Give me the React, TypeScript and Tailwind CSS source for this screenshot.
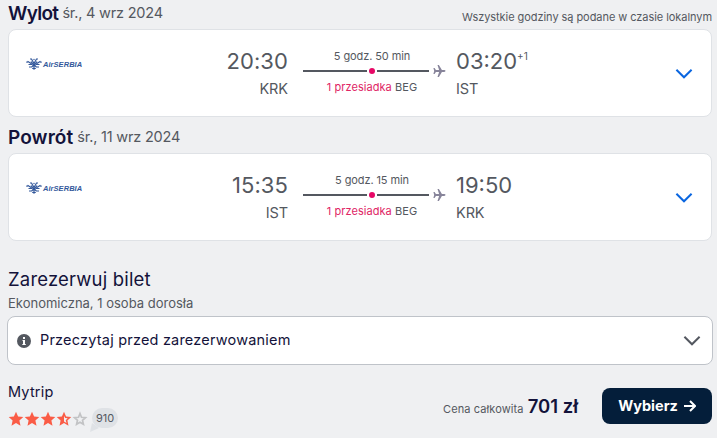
import React from "react";

interface Flight {
  departure: string;
  from: string;
  arrival: string;
  to: string;
  duration: string;
  via: string;
  nextDay?: string;
}

const outbound: Flight = {
  departure: "20:30",
  from: "KRK",
  arrival: "03:20",
  to: "IST",
  duration: "5 godz. 50 min",
  via: "BEG",
  nextDay: "+1",
};

const inbound: Flight = {
  departure: "15:35",
  from: "IST",
  arrival: "19:50",
  to: "KRK",
  duration: "5 godz. 15 min",
  via: "BEG",
};

function AirlineLogo() {
  return (
    <div className="flex h-3 w-[57px] items-center gap-[1px] text-[#33589b]">
      <svg width="16" height="12" viewBox="0 0 16 12" className="shrink-0" fill="none" stroke="currentColor" strokeWidth="1.2">
        <path d="M.3 4.2h1.5M15.7 4.2h-1.5M1.5 3.2 5.5 5.8M14.5 3.2l-4 2.6M4 1h1.5L8 5.5 10.500 1H12M5 3.500 8 7.500l3-4M2.500 6.500h3.800M13.500 6.500H9.700M3 9h2.800L8 6.500 10.200 9H13M8 7v4.800M6.200 10.500h3.600" />
        <circle cx="8" cy="1.5" r=".7" fill="currentColor" stroke="none" />
      </svg>
      <span className="whitespace-nowrap pt-[2px] font-['Liberation_Sans',sans-serif] text-[7.5px] font-bold italic leading-3 tracking-[0.05px]">
        AirSERBIA
      </span>
    </div>
  );
}

function Chevron({ className }: { className: string }) {
  return (
    <svg width="18" height="12" viewBox="0 0 18 12" fill="none" stroke="currentColor" strokeWidth="2" className={className}>
      <path d="M1.4 1.7 9 9.3l7.6-7.6" />
    </svg>
  );
}

function Plane() {
  return (
    <svg width="13" height="12" viewBox="0 0 13 12" className="ml-[4px] shrink-0 text-[#87849a]" fill="currentColor">
      <path d="M.4 3h1.2l1.3 2.1h3.2L4.500 0h1.400l3 5.100h2.300c1.800 0 1.800 1.800 0 1.800H8.900L5.900 12H4.500l1.600-5.100H2.900L1.600 9H.4l.8-3z" />
    </svg>
  );
}

function FlightCard({ flight }: { flight: Flight }) {
  return (
    <div className="flex h-[88px] w-[704px] rounded-lg border border-[#dfe2e6] bg-white text-[#545860]">
      <div className="w-[160px] pl-[17px] pt-[28px]">
        <AirlineLogo />
      </div>
      <div className="flex w-[119px] flex-col items-end pt-[17px]">
        <span className="text-[22px] leading-7 tracking-[0.1px]">{flight.departure}</span>
        <span className="mt-[4px] text-[14.5px] leading-5 tracking-[-0.1px]">{flight.from}</span>
      </div>
      <div className="ml-[15px] w-[143px] pt-[18px]">
        <p className="w-[138px] text-center text-[11px] leading-4 tracking-[-0.1px]">{flight.duration}</p>
        <div className="flex h-[14px] items-center">
          <div className="h-[2px] w-[64px] bg-[#545860]" />
          <div className="mx-[2px] size-[6px] rounded-full bg-[#e70866]" />
          <div className="h-[2px] w-[52px] bg-[#545860]" />
          <Plane />
        </div>
        <p className="mt-px w-[138px] text-center text-[11px] leading-4 tracking-[0.05px]">
          <span className="text-[#e02565]">1 przesiadka</span> {flight.via}
        </p>
      </div>
      <div className="ml-[10px] flex flex-col pt-[17px]">
        <div className="flex">
          <span className="text-[22px] leading-7">{flight.arrival}</span>
          {flight.nextDay && <span className="mt-px text-[10px] leading-4">{flight.nextDay}</span>}
        </div>
        <span className="mt-[4px] text-[14.5px] leading-5 tracking-[-0.1px]">{flight.to}</span>
      </div>
      <Chevron className="ml-auto mr-[18px] mt-[38px] text-[#0a66e0]" />
    </div>
  );
}

const STAR = "M8 .8l2.1 4.8 5.2.5-3.9 3.5 1.1 5.2L8 12.1l-4.5 2.7 1.1-5.2L.7 6.1l5.2-.5z";

function Star({ type }: { type: "full" | "half" | "empty" }) {
  return (
    <svg width="16" height="16" viewBox="0 0 16 16">
      {type === "full" && <path d={STAR} fill="#fa5c46" />}
      {type === "half" && (
        <>
          <path d={STAR} fill="#fa5c46" />
          <path d="M8 5v5.5l2.5 1.6-.8-2.900 2-1.900-2.500-.2z" fill="#eff0f2" />
        </>
      )}
      {type === "empty" && (
        <path d="M8 2.5l1.5 3.8 4 .4-3 2.6.9 4L8 11.2l-3.4 2.100.9-4-3-2.600 4-.4z" fill="none" stroke="#c2c3c5" strokeWidth="1.7" />
      )}
    </svg>
  );
}

export default function App() {
  return (
    <div className="flex h-[438px] w-[717px] flex-col overflow-hidden whitespace-nowrap bg-[#eff0f2] pl-2 font-['Inter',sans-serif] text-[#13123a]">
      <div className="flex h-[29px] w-[704px] justify-between">
        <div className="flex items-start gap-1">
          <h2 className="text-[19px] font-semibold leading-[27px] tracking-[-0.7px]">Wylot</h2>
          <span className="pt-[3px] text-[14.5px] leading-5 tracking-[-0.2px] text-[#545860]">śr., 4 wrz 2024</span>
        </div>
        <span className="pt-[9px] text-[11px] leading-4 tracking-[-0.06px] text-[#545860]">
          Wszystkie godziny są podane w czasie lokalnym
        </span>
      </div>
      <FlightCard flight={outbound} />

      <div className="flex h-[36px] items-start gap-1 pt-[7px]">
        <h2 className="text-[19px] font-semibold leading-[27px] tracking-[0.1px]">Powrót</h2>
        <span className="pt-[3px] text-[14.5px] leading-5 tracking-[-0.2px] text-[#545860]">śr., 11 wrz 2024</span>
      </div>
      <FlightCard flight={inbound} />

      <h3 className="mt-[26px] text-[18.5px] leading-6 tracking-[0.18px]">Zarezerwuj bilet</h3>
      <p className="mt-[4px] text-[13px] leading-[17px] text-[#545860]">Ekonomiczna, 1 osoba dorosła</p>
      <button className="-ml-[1px] mt-[4px] flex h-[49px] w-[706px] items-center rounded-lg border border-[#bfc3c9] bg-white pl-[9px] pr-[11px]">
        <svg width="14" height="14" viewBox="0 0 14 14" className="mt-[1px]">
          <circle cx="7" cy="7" r="7" fill="#545860" />
          <path d="M6 3h2v2H6zM5.5 6H8v4h.8v1H5.3v-1H6V7h-.5z" fill="#fff" />
        </svg>
        <span className="-mt-[2px] ml-[9px] text-[14.5px] tracking-[0.2px]">Przeczytaj przed zarezerwowaniem</span>
        <Chevron className="ml-auto text-[#545860]" />
      </button>

      <div className="flex w-[704px] justify-between">
        <div className="pt-[17px]">
          <p className="text-[14.5px] leading-5 tracking-[0.2px]">Mytrip</p>
          <div className="mt-[5px] flex items-start">
            <div className="flex pt-[4px]">
              <Star type="full" />
              <Star type="full" />
              <Star type="full" />
              <Star type="half" />
              <Star type="empty" />
            </div>
            <div className="relative ml-1 mt-px flex h-[20px] w-[26px] items-center justify-center rounded-full bg-[#dfe2e6] text-[11px] text-[#545860]">
              <svg width="9" height="9" viewBox="0 0 9 9" className="absolute -bottom-[4px] -left-[2px]" fill="#dfe2e6">
                <path d="M2 0 0 9l9-4z" />
              </svg>
              <span className="relative">910</span>
            </div>
          </div>
        </div>
        <div className="flex items-start pt-[23px]">
          <div className="mr-[24px] flex items-baseline gap-1 pt-[5px]">
            <span className="text-[11px] tracking-[0.1px] text-[#545860]">Cena całkowita</span>
            <span className="text-[18.5px] font-semibold leading-[26px]">701 zł</span>
          </div>
          <button className="flex h-[36px] w-[110px] items-center justify-center gap-[6px] rounded-lg bg-[#041e3a] text-[14.5px] font-bold text-white">
            Wybierz
            <svg width="12" height="12" viewBox="0 0 12 12" fill="none" stroke="currentColor" strokeWidth="2">
              <path d="M0 6h11M6 1l5 5-5 5" />
            </svg>
          </button>
        </div>
      </div>
    </div>
  );
}
